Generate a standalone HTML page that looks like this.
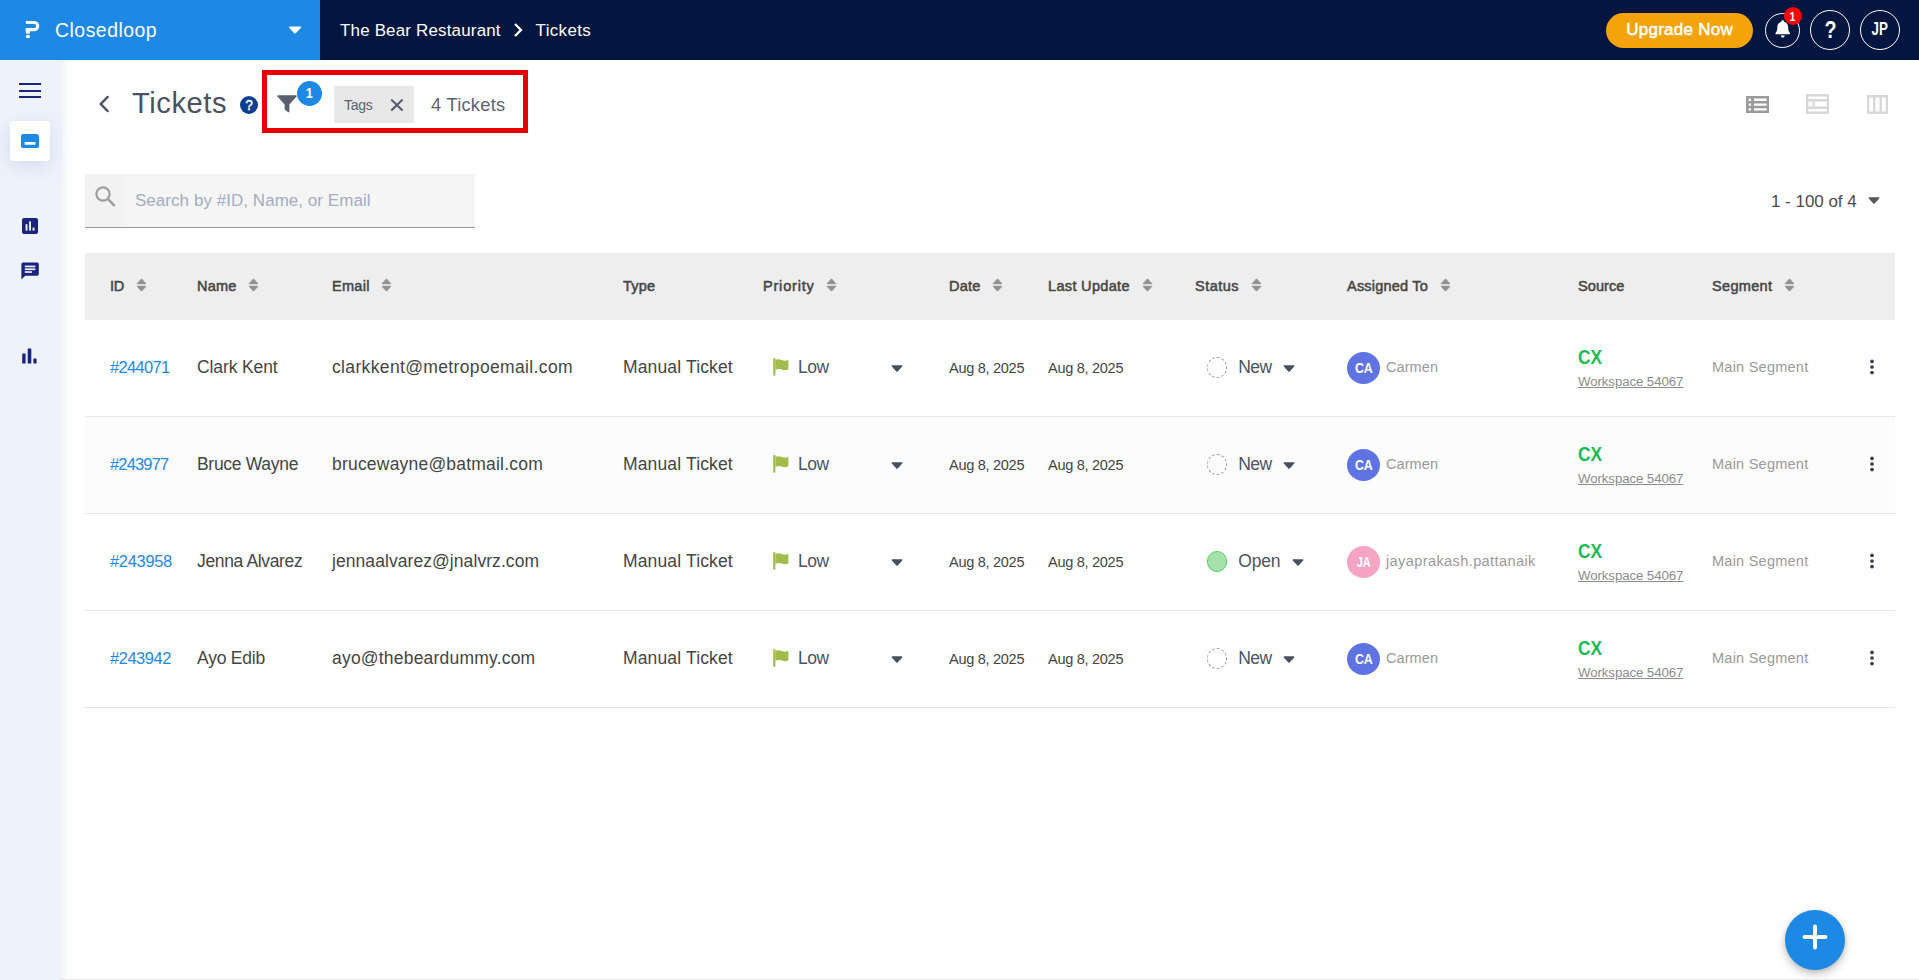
<!DOCTYPE html>
<html lang="en"><head><meta charset="utf-8"><title>Tickets - The Bear Restaurant</title>
<style>
*{box-sizing:border-box;margin:0;padding:0}
html,body{width:1919px;height:980px;overflow:hidden;background:#fff}
body{font-family:"Liberation Sans","DejaVu Sans",sans-serif;position:relative;color:#454545}
.t{white-space:pre;display:inline-block}
svg{display:block}
/* top bar */
#topbar{position:absolute;left:0;top:0;width:1919px;height:60px;background:#02163f;color:#fff}
#brand{position:absolute;left:0;top:0;width:320px;height:60px;background:#1e88e5;line-height:60px}
#brand .logo{position:absolute;left:25px;top:20px}
#brand .name{position:absolute;left:55px;top:0}
#brand .dd{position:absolute;left:288px;top:26px}
#crumbs{position:absolute;left:340px;top:1px;height:60px;line-height:60px;display:flex;align-items:center}
#crumbs .sep{margin:0 13px 0 12px;position:relative;top:-1.5px}
#upgrade{position:absolute;left:1606px;top:13px;width:147px;height:35px;border-radius:18px;background:#f5a30a;line-height:33px;text-align:center}
.rb{position:absolute;border:1px solid #fff;border-radius:50%;display:flex;align-items:center;justify-content:center}
#bell{left:1765px;top:13px;width:35px;height:35px}
#bell .badge{position:absolute;left:18px;top:-7px;width:18px;height:18px;border-radius:50%;background:#f9000b;line-height:18px;text-align:center}
#help{left:1810px;top:10px;width:40px;height:40px}
#user{left:1860px;top:10px;width:40px;height:40px}
/* side */
#side{position:absolute;left:0;top:60px;width:62px;height:920px;background:#eef2fb}
#sideshadow{position:absolute;left:62px;top:60px;width:14px;height:920px;background:linear-gradient(90deg,rgba(222,227,240,.38),rgba(240,243,250,.16) 45%,rgba(255,255,255,0))}
#side .burger{position:absolute;left:19px;top:83px;width:22px}
#side .burger i{display:block;height:2px;background:#1a237e;margin-bottom:4.5px}
#side .act{position:absolute;left:10px;top:61px;width:40px;height:40px;border-radius:3px;background:#fff;box-shadow:0 5px 18px rgba(150,165,210,.3)}
#side svg{position:absolute}
/* title row */
#back{position:absolute;left:98px;top:95px}
#title{position:absolute;left:132px;top:72px;height:60px;line-height:60px;color:#4a5261}
#qhelp{position:absolute;left:240px;top:96px;width:18px;height:18px;border-radius:50%;background:#0b3f91;color:#fff;text-align:center;line-height:18px}
#hl{position:absolute;left:262px;top:70px;width:266px;height:63px;border:5px solid #e60202}
#funnel{position:absolute;left:277px;top:95px}
#fbadge{position:absolute;left:297px;top:81px;width:25px;height:25px;border-radius:50%;background:#1e88e5;color:#fff;text-align:center;line-height:25px}
#chip{position:absolute;left:334px;top:86px;width:80px;height:37px;background:#e8e8e8;line-height:37px;color:#5b6370}
#chip .lbl{position:absolute;left:10px;top:0}
#chip svg{position:absolute;left:56px;top:13px}
#count{position:absolute;left:431px;top:75px;height:60px;line-height:60px;color:#5b6370}
#views svg{position:absolute}
/* search */
#search{position:absolute;left:85px;top:174px;width:390px;height:54px;background:#f5f5f5;border-bottom:1px solid #9a9a9a}
#search .ic{position:absolute;left:0;top:0;width:40px;height:53px;background:#f2f2f2}
#search .ic svg{position:absolute;left:10px;top:12px}
#search .ph{position:absolute;left:50px;top:0;line-height:53px;color:#a3acc0}
#pager{position:absolute;left:1771px;top:181px;height:42px;line-height:42px;color:#4a4a4a}
#pager svg{position:absolute;left:96.5px;top:16px}
/* table */
#tbl{position:absolute;left:85px;top:253px;width:1810px}
.th,.tr{display:flex;width:1810px}
.th{height:67px;background:#eeeeee;color:#454545}
.tr{height:97px;border-bottom:1px solid #e7e7e7;background:#fff}
.tr.alt{background:#fcfcfc}
.c{display:flex;align-items:center;height:100%;flex:none;position:relative;padding-bottom:2px}
.th .c{padding-top:0}
.sort{margin-left:12px;position:relative;top:-0.5px}
.c-pad{width:25px}.c-id{width:87px}.c-name{width:135px}.c-email{width:291px}.c-type{width:140px}
.c-prio{width:186px}.c-date{width:99px}.c-upd{width:147px}.c-status{width:152px}.c-asg{width:231px}
.c-src{width:134px}.c-seg{width:138px}.c-act{width:45px}
.tr a{color:#1e88e5}
.sel{color:#4c5462;position:relative;width:150px;height:40px;display:flex;align-items:center;padding-left:9px}
.sel .flag{margin-right:9px;position:relative;top:0px;margin-left:1px}
.sel .caret{position:absolute;left:128px;top:18px}
.c-date,.c-upd{padding-top:1px}
.st{display:inline-block;width:20.5px;height:20.5px;border-radius:50%;margin-left:11.7px;margin-right:11px;position:relative;top:0.5px}
.st-new{border:1px dashed #9a9a9a}
.st-open{background:#a5e1a9;border:1px solid #55cf66}
.tr .c-status{color:#4c5462}
.c-status .caret{margin-left:11px;position:relative;top:1px}
.av{position:relative;top:1px;width:33px;height:32px;border-radius:50%;color:#fff;display:flex;align-items:center;justify-content:center;margin-right:6px;margin-left:0px}
.av.ca{background:#5f74e2}.av.ja{background:#f6a4c4}
.asg-name{color:#9a9a9a}
.c-src{flex-direction:column;align-items:flex-start;justify-content:center}
.cx{color:#1cb955;line-height:24px;margin-top:2px}
.ws{color:#8c8c8c;line-height:18px;margin-top:1px;text-decoration:underline}
.ws .t{text-decoration:underline}
.tr .c-seg{color:#9a9a9a}
.kebab{position:absolute;left:19px;top:39px}
#fab{position:absolute;left:1785px;top:910px;width:60px;height:60px;border-radius:50%;background:#1e88e5;box-shadow:0 4px 10px rgba(0,0,0,.22),0 1px 4px rgba(0,0,0,.12)}
#fab svg{position:absolute;left:17px;top:14px}
#botline{position:absolute;left:60px;top:979px;width:1859px;height:1px;background:#e9e9ec}
</style></head><body>

<header id="topbar">
  <div id="brand">
    <svg class="logo" width="15" height="19" viewBox="0 0 15 19"><path d="M0.8 2.5 H9.15 A3.55 3.55 0 0 1 9.15 9.6 H0.8" fill="none" stroke="#fff" stroke-width="3.2"/><rect x="0.8" y="8" width="4.1" height="5.5" fill="#fff"/><circle cx="2.9" cy="16.4" r="1.95" fill="#fff"/></svg>
    <div class="name"><span class="t" style="font-size:19.4px;font-weight:400;letter-spacing:0.512px;margin-right:-0.512px;">Closedloop</span></div>
    <svg class="dd" width="14" height="8" viewBox="0 0 14 8"><path d="M1.6 0.4 H12.4 Q13.7 0.6 12.9 1.7 L7.8 7.2 Q7 7.9 6.2 7.2 L1.1 1.7 Q0.3 0.6 1.6 0.4 Z" fill="#fff"/></svg>
  </div>
  <nav id="crumbs"><span class="t" style="font-size:16.97px;font-weight:400;letter-spacing:0.177px;margin-right:-0.177px;">The Bear Restaurant</span><svg class="sep" width="10" height="14" viewBox="0 0 10 14"><path d="M2 1 L8 7 L2 13" fill="none" stroke="#fff" stroke-width="2.3"/></svg><span class="t" style="font-size:16.97px;font-weight:400;letter-spacing:0.354px;margin-right:-0.354px;">Tickets</span></nav>
  <div id="upgrade"><span class="t" style="font-size:16.97px;font-weight:400;letter-spacing:0.278px;-webkit-text-stroke:0.5px currentColor;margin-right:-0.278px;">Upgrade Now</span></div>
  <div id="bell" class="rb"><svg style="position:relative;top:-1.5px" width="15.5" height="18" viewBox="0 0 16 19"><path d="M8 0.3 C8.9 0.3 9.5 0.9 9.5 1.8 C12.3 2.5 13.7 4.9 13.7 7.6 C13.7 11.2 14.6 12.6 15.6 13.6 C16 14 15.8 15 15 15 H1 C0.2 15 0 14 0.4 13.6 C1.4 12.6 2.3 11.2 2.3 7.6 C2.3 4.9 3.7 2.5 6.5 1.8 C6.5 0.9 7.1 0.3 8 0.3 Z M5.9 16.3 H10.1 C10.1 17.6 9.2 18.5 8 18.5 C6.8 18.5 5.9 17.6 5.9 16.3 Z" fill="#fff"/></svg><span class="badge"><span class="t" style="font-size:12.61px;font-weight:700;letter-spacing:0.000px;transform:scaleX(0.846);transform-origin:center center;">1</span></span></div>
  <div id="help" class="rb"><span class="t" style="font-size:24.25px;font-weight:700;letter-spacing:0.000px;transform:scaleX(0.811);transform-origin:center center;">?</span></div>
  <div id="user" class="rb"><span class="t" style="font-size:17.46px;font-weight:700;letter-spacing:0.000px;transform:scaleX(0.767);transform-origin:center center;position:relative;top:-1px;">JP</span></div>
</header>

<aside id="side">
  <div class="burger" style="top:23px"><i></i><i></i><i></i></div>
  <div class="act"></div>
  <svg style="left:21px;top:74px" width="18" height="14.2" viewBox="0 0 18 14.2"><rect x="0" y="0" width="18" height="14.2" rx="2.4" fill="#1e88e5"/><rect x="3.6" y="8" width="10.8" height="2.8" rx="0.6" fill="#fff"/></svg>
  <svg style="left:22px;top:158px" width="16" height="16" viewBox="0 0 16 16"><rect x="0" y="0" width="16" height="16" rx="2" fill="#1a237e"/><rect x="3.6" y="6.2" width="1.9" height="6.4" fill="#eef2fb"/><rect x="7.1" y="3.4" width="1.9" height="9.2" fill="#eef2fb"/><rect x="10.6" y="9.6" width="1.9" height="3" fill="#eef2fb"/></svg>
  <svg style="left:21px;top:202px" width="18" height="18" viewBox="0 0 18 18"><path d="M2 0.4 H16 Q17.8 0.4 17.8 2.2 V12 Q17.8 13.8 16 13.8 H4.2 L0.4 17.6 V2.2 Q0.4 0.4 2 0.4 Z" fill="#1a237e"/><rect x="3.8" y="3.6" width="10.6" height="1.7" fill="#eef2fb"/><rect x="3.8" y="6.4" width="10.6" height="1.7" fill="#eef2fb"/><rect x="3.8" y="9.2" width="7.2" height="1.7" fill="#eef2fb"/></svg>
  <svg style="left:22px;top:288px" width="15" height="16" viewBox="0 0 15 16"><rect x="0.2" y="5.6" width="3.4" height="10" rx="0.5" fill="#1a237e"/><rect x="5.7" y="0.4" width="3.6" height="15.2" rx="0.5" fill="#1a237e"/><rect x="11.4" y="10.6" width="3.2" height="5" rx="0.5" fill="#1a237e"/></svg>
</aside>
<div id="sideshadow"></div>

<main>
  <svg id="back" width="12" height="18" viewBox="0 0 12 18"><path d="M9.6 2 L2.8 9 L9.6 16" fill="none" stroke="#4a5261" stroke-width="2.5" stroke-linecap="round"/></svg>
  <h1 id="title"><span class="t" style="font-size:29.1px;font-weight:400;letter-spacing:0.589px;margin-right:-0.589px;">Tickets</span></h1>
  <div id="qhelp"><span class="t" style="font-size:15.04px;font-weight:400;letter-spacing:0.000px;-webkit-text-stroke:0.5px currentColor;transform:scaleX(0.873);transform-origin:center center;">?</span></div>
  <div id="hl"></div>
  <svg id="funnel" width="20" height="18" viewBox="0 0 20 18"><path d="M1.2 0.2 H18.8 Q20.3 0.5 19.4 1.8 L12.4 9.6 V16.4 Q12.2 17.9 10.9 17 L8.2 14.9 Q7.6 14.4 7.6 13.6 V9.6 L0.6 1.8 Q-0.3 0.5 1.2 0.2 Z" fill="#5a606b"/></svg>
  <div id="fbadge"><span class="t" style="font-size:15.04px;font-weight:700;letter-spacing:0.000px;transform:scaleX(0.845);transform-origin:center center;position:relative;top:-1px;">1</span></div>
  <div id="chip"><span class="lbl"><span class="t" style="font-size:14.06px;font-weight:400;letter-spacing:-0.312px;margin-right:0.312px;">Tags</span></span><svg width="14" height="12" viewBox="0 0 14 12"><path d="M1.2 0.6 L12.6 11.6 M12.6 0.6 L1.2 11.6" stroke="#555c68" stroke-width="2.1" fill="none"/></svg></div>
  <div id="count"><span class="t" style="font-size:18.19px;font-weight:400;letter-spacing:0.287px;margin-right:-0.287px;">4 Tickets</span></div>
  <div id="views">
    <svg style="left:1746px;top:96px" width="23" height="17" viewBox="0 0 23 17"><path fill-rule="evenodd" fill="#9b9b9b" d="M0 0 H23 V17 H0 Z M2.6 2.6 V5 H5 V2.6 Z M8 2.6 V5 H20.6 V2.6 Z M2.6 7.4 V9.8 H5 V7.4 Z M8 7.4 V9.8 H20.6 V7.4 Z M2.6 12.2 V14.6 H5 V12.2 Z M8 12.2 V14.6 H20.6 V12.2 Z"/></svg>
    <svg style="left:1806px;top:94px" width="23" height="20" viewBox="0 0 23 20"><path fill-rule="evenodd" fill="#d8d8d8" d="M0 0 H23 V20 H0 Z M2.4 2.4 V5 H20.6 V2.4 Z M2.4 7.4 V12.6 H6.4 V7.4 Z M8.8 7.4 V12.6 H20.6 V7.4 Z M2.4 15 V17.6 H20.6 V15 Z"/></svg>
    <svg style="left:1867px;top:95px" width="21" height="19" viewBox="0 0 21 19"><path fill-rule="evenodd" fill="#d8d8d8" d="M0 0 H21 V19 H0 Z M2.2 2.4 V16.6 H6 V2.4 Z M8.4 2.4 V16.6 H12.6 V2.4 Z M15 2.4 V16.6 H18.8 V2.4 Z"/></svg>
  </div>

  <div id="search"><div class="ic"><svg width="21" height="21" viewBox="0 0 21 21"><circle cx="8" cy="8" r="6.6" fill="none" stroke="#9e9e9e" stroke-width="2.2"/><path d="M12.8 12.8 L19.6 19.8" stroke="#9e9e9e" stroke-width="2.6"/></svg></div><span class="ph"><span class="t" style="font-size:16.97px;font-weight:400;letter-spacing:0.066px;margin-right:-0.066px;">Search by #ID, Name, or Email</span></span></div>
  <div id="pager"><span class="t" style="font-size:16.97px;font-weight:400;letter-spacing:-0.009px;margin-right:0.009px;">1 - 100 of 4</span><svg width="12" height="7" viewBox="0 0 12 7"><path d="M1.2 0.3 H10.8 Q11.9 0.5 11.2 1.5 L6.7 6.4 Q6 7 5.3 6.4 L0.8 1.5 Q0.1 0.5 1.2 0.3 Z" fill="#585858"/></svg></div>

  <div id="tbl">
    <div class="th">
      <div class="c c-pad"></div>
      <div class="c c-id"><span class="t" style="font-size:14.55px;font-weight:400;letter-spacing:-0.211px;-webkit-text-stroke:0.5px currentColor;">ID</span><svg class="sort" width="11" height="14" viewBox="0 0 11 14"><path d="M5.5 0.9 L9.9 5.7 H1.1 Z M1.1 8.3 H9.9 L5.5 13.1 Z" fill="#909090" stroke="#909090" stroke-width="1" stroke-linejoin="round"/></svg></div>
      <div class="c c-name"><span class="t" style="font-size:14.55px;font-weight:400;letter-spacing:0.151px;-webkit-text-stroke:0.5px currentColor;margin-right:-0.151px;">Name</span><svg class="sort" width="11" height="14" viewBox="0 0 11 14"><path d="M5.5 0.9 L9.9 5.7 H1.1 Z M1.1 8.3 H9.9 L5.5 13.1 Z" fill="#909090" stroke="#909090" stroke-width="1" stroke-linejoin="round"/></svg></div>
      <div class="c c-email"><span class="t" style="font-size:14.55px;font-weight:400;letter-spacing:0.258px;-webkit-text-stroke:0.5px currentColor;margin-right:-0.258px;">Email</span><svg class="sort" width="11" height="14" viewBox="0 0 11 14"><path d="M5.5 0.9 L9.9 5.7 H1.1 Z M1.1 8.3 H9.9 L5.5 13.1 Z" fill="#909090" stroke="#909090" stroke-width="1" stroke-linejoin="round"/></svg></div>
      <div class="c c-type"><span class="t" style="font-size:14.55px;font-weight:400;letter-spacing:0.193px;-webkit-text-stroke:0.5px currentColor;margin-right:-0.193px;">Type</span></div>
      <div class="c c-prio"><span class="t" style="font-size:14.55px;font-weight:400;letter-spacing:0.783px;-webkit-text-stroke:0.5px currentColor;margin-right:-0.783px;">Priority</span><svg class="sort" width="11" height="14" viewBox="0 0 11 14"><path d="M5.5 0.9 L9.9 5.7 H1.1 Z M1.1 8.3 H9.9 L5.5 13.1 Z" fill="#909090" stroke="#909090" stroke-width="1" stroke-linejoin="round"/></svg></div>
      <div class="c c-date"><span class="t" style="font-size:14.55px;font-weight:400;letter-spacing:0.214px;-webkit-text-stroke:0.5px currentColor;margin-right:-0.214px;">Date</span><svg class="sort" width="11" height="14" viewBox="0 0 11 14"><path d="M5.5 0.9 L9.9 5.7 H1.1 Z M1.1 8.3 H9.9 L5.5 13.1 Z" fill="#909090" stroke="#909090" stroke-width="1" stroke-linejoin="round"/></svg></div>
      <div class="c c-upd"><span class="t" style="font-size:14.55px;font-weight:400;letter-spacing:0.311px;-webkit-text-stroke:0.5px currentColor;margin-right:-0.311px;">Last Update</span><svg class="sort" width="11" height="14" viewBox="0 0 11 14"><path d="M5.5 0.9 L9.9 5.7 H1.1 Z M1.1 8.3 H9.9 L5.5 13.1 Z" fill="#909090" stroke="#909090" stroke-width="1" stroke-linejoin="round"/></svg></div>
      <div class="c c-status"><span class="t" style="font-size:14.55px;font-weight:400;letter-spacing:0.450px;-webkit-text-stroke:0.5px currentColor;margin-right:-0.450px;">Status</span><svg class="sort" width="11" height="14" viewBox="0 0 11 14"><path d="M5.5 0.9 L9.9 5.7 H1.1 Z M1.1 8.3 H9.9 L5.5 13.1 Z" fill="#909090" stroke="#909090" stroke-width="1" stroke-linejoin="round"/></svg></div>
      <div class="c c-asg"><span class="t" style="font-size:14.55px;font-weight:400;letter-spacing:0.177px;-webkit-text-stroke:0.5px currentColor;margin-right:-0.177px;">Assigned To</span><svg class="sort" width="11" height="14" viewBox="0 0 11 14"><path d="M5.5 0.9 L9.9 5.7 H1.1 Z M1.1 8.3 H9.9 L5.5 13.1 Z" fill="#909090" stroke="#909090" stroke-width="1" stroke-linejoin="round"/></svg></div>
      <div class="c c-src"><span class="t" style="font-size:14.55px;font-weight:400;letter-spacing:0.059px;-webkit-text-stroke:0.5px currentColor;margin-right:-0.059px;">Source</span></div>
      <div class="c c-seg"><span class="t" style="font-size:14.55px;font-weight:400;letter-spacing:0.297px;-webkit-text-stroke:0.5px currentColor;margin-right:-0.297px;">Segment</span><svg class="sort" width="11" height="14" viewBox="0 0 11 14"><path d="M5.5 0.9 L9.9 5.7 H1.1 Z M1.1 8.3 H9.9 L5.5 13.1 Z" fill="#909090" stroke="#909090" stroke-width="1" stroke-linejoin="round"/></svg></div>
      <div class="c c-act"></div>
    </div>
    
  <div class="tr">
    <div class="c c-pad"></div>
    <div class="c c-id"><a><span class="t" style="font-size:16.45px;font-weight:400;letter-spacing:-0.635px;margin-right:0.635px;">#244071</span></a></div>
    <div class="c c-name"><span class="t" style="font-size:17.5px;font-weight:400;letter-spacing:-0.109px;margin-right:0.109px;">Clark Kent</span></div>
    <div class="c c-email"><span class="t" style="font-size:17.5px;font-weight:400;letter-spacing:0.354px;margin-right:-0.354px;">clarkkent@metropoemail.com</span></div>
    <div class="c c-type"><span class="t" style="font-size:17.5px;font-weight:400;letter-spacing:0.145px;margin-right:-0.145px;">Manual Ticket</span></div>
    <div class="c c-prio"><div class="sel"><svg class="flag" width="16" height="18" viewBox="0 0 16 18"><path d="M0.2 0.2 H2.4 V17.6 H0.2 Z" fill="#a1bc4c"/><path d="M2.4 1.8 C5 0.6 7 1.3 8.8 2 C11 2.9 13 2.9 15.4 1.7 V11.3 C13 12.6 11 12.5 8.8 11.6 C7 10.9 5 10.4 2.4 11.7 Z" fill="#a1bc4c"/></svg><span class="t" style="font-size:17.5px;font-weight:400;letter-spacing:-0.531px;margin-right:0.531px;">Low</span><svg class="caret" width="12" height="7" viewBox="0 0 12 7"><path d="M1.2 0.3 H10.8 Q11.9 0.5 11.2 1.5 L6.7 6.4 Q6 7 5.3 6.4 L0.8 1.5 Q0.1 0.5 1.2 0.3 Z" fill="#485160"/></svg></div></div>
    <div class="c c-date"><span class="t" style="font-size:14.55px;font-weight:400;letter-spacing:-0.297px;margin-right:0.297px;">Aug 8, 2025</span></div>
    <div class="c c-upd"><span class="t" style="font-size:14.55px;font-weight:400;letter-spacing:-0.297px;margin-right:0.297px;">Aug 8, 2025</span></div>
    <div class="c c-status"><span class="st st-new"></span><span class="t" style="font-size:17.5px;font-weight:400;letter-spacing:-0.484px;margin-right:0.484px;">New</span><svg class="caret" width="12" height="7" viewBox="0 0 12 7"><path d="M1.2 0.3 H10.8 Q11.9 0.5 11.2 1.5 L6.7 6.4 Q6 7 5.3 6.4 L0.8 1.5 Q0.1 0.5 1.2 0.3 Z" fill="#485160"/></svg></div>
    <div class="c c-asg"><span class="av ca"><span class="t" style="font-size:15.04px;font-weight:700;letter-spacing:0.000px;transform:scaleX(0.826);transform-origin:center center;position:relative;top:-1px;">CA</span></span><span class="asg-name"><span class="t" style="font-size:14.55px;font-weight:400;letter-spacing:0.056px;margin-right:-0.056px;">Carmen</span></span></div>
    <div class="c c-src"><div class="cx"><span class="t" style="font-size:20.37px;font-weight:700;letter-spacing:0.000px;transform:scaleX(0.852);transform-origin:left center;">CX</span></div><div class="ws"><span class="t" style="font-size:13.29px;font-weight:400;letter-spacing:-0.102px;margin-right:0.102px;">Workspace 54067</span></div></div>
    <div class="c c-seg"><span class="t" style="font-size:14.55px;font-weight:400;letter-spacing:0.220px;margin-right:-0.220px;">Main Segment</span></div>
    <div class="c c-act"><svg class="kebab" width="6" height="16" viewBox="0 0 6 16"><circle cx="3" cy="2.4" r="1.85" fill="#3b414c"/><circle cx="3" cy="8" r="1.85" fill="#3b414c"/><circle cx="3" cy="13.6" r="1.85" fill="#3b414c"/></svg></div>
  </div>
    
  <div class="tr alt">
    <div class="c c-pad"></div>
    <div class="c c-id"><a><span class="t" style="font-size:16.45px;font-weight:400;letter-spacing:-0.812px;margin-right:0.812px;">#243977</span></a></div>
    <div class="c c-name"><span class="t" style="font-size:17.5px;font-weight:400;letter-spacing:-0.303px;margin-right:0.303px;">Bruce Wayne</span></div>
    <div class="c c-email"><span class="t" style="font-size:17.5px;font-weight:400;letter-spacing:0.202px;margin-right:-0.202px;">brucewayne@batmail.com</span></div>
    <div class="c c-type"><span class="t" style="font-size:17.5px;font-weight:400;letter-spacing:0.145px;margin-right:-0.145px;">Manual Ticket</span></div>
    <div class="c c-prio"><div class="sel"><svg class="flag" width="16" height="18" viewBox="0 0 16 18"><path d="M0.2 0.2 H2.4 V17.6 H0.2 Z" fill="#a1bc4c"/><path d="M2.4 1.8 C5 0.6 7 1.3 8.8 2 C11 2.9 13 2.9 15.4 1.7 V11.3 C13 12.6 11 12.5 8.8 11.6 C7 10.9 5 10.4 2.4 11.7 Z" fill="#a1bc4c"/></svg><span class="t" style="font-size:17.5px;font-weight:400;letter-spacing:-0.531px;margin-right:0.531px;">Low</span><svg class="caret" width="12" height="7" viewBox="0 0 12 7"><path d="M1.2 0.3 H10.8 Q11.9 0.5 11.2 1.5 L6.7 6.4 Q6 7 5.3 6.4 L0.8 1.5 Q0.1 0.5 1.2 0.3 Z" fill="#485160"/></svg></div></div>
    <div class="c c-date"><span class="t" style="font-size:14.55px;font-weight:400;letter-spacing:-0.297px;margin-right:0.297px;">Aug 8, 2025</span></div>
    <div class="c c-upd"><span class="t" style="font-size:14.55px;font-weight:400;letter-spacing:-0.297px;margin-right:0.297px;">Aug 8, 2025</span></div>
    <div class="c c-status"><span class="st st-new"></span><span class="t" style="font-size:17.5px;font-weight:400;letter-spacing:-0.484px;margin-right:0.484px;">New</span><svg class="caret" width="12" height="7" viewBox="0 0 12 7"><path d="M1.2 0.3 H10.8 Q11.9 0.5 11.2 1.5 L6.7 6.4 Q6 7 5.3 6.4 L0.8 1.5 Q0.1 0.5 1.2 0.3 Z" fill="#485160"/></svg></div>
    <div class="c c-asg"><span class="av ca"><span class="t" style="font-size:15.04px;font-weight:700;letter-spacing:0.000px;transform:scaleX(0.826);transform-origin:center center;position:relative;top:-1px;">CA</span></span><span class="asg-name"><span class="t" style="font-size:14.55px;font-weight:400;letter-spacing:0.056px;margin-right:-0.056px;">Carmen</span></span></div>
    <div class="c c-src"><div class="cx"><span class="t" style="font-size:20.37px;font-weight:700;letter-spacing:0.000px;transform:scaleX(0.852);transform-origin:left center;">CX</span></div><div class="ws"><span class="t" style="font-size:13.29px;font-weight:400;letter-spacing:-0.102px;margin-right:0.102px;">Workspace 54067</span></div></div>
    <div class="c c-seg"><span class="t" style="font-size:14.55px;font-weight:400;letter-spacing:0.220px;margin-right:-0.220px;">Main Segment</span></div>
    <div class="c c-act"><svg class="kebab" width="6" height="16" viewBox="0 0 6 16"><circle cx="3" cy="2.4" r="1.85" fill="#3b414c"/><circle cx="3" cy="8" r="1.85" fill="#3b414c"/><circle cx="3" cy="13.6" r="1.85" fill="#3b414c"/></svg></div>
  </div>
    
  <div class="tr">
    <div class="c c-pad"></div>
    <div class="c c-id"><a><span class="t" style="font-size:16.45px;font-weight:400;letter-spacing:-0.292px;margin-right:0.292px;">#243958</span></a></div>
    <div class="c c-name"><span class="t" style="font-size:17.5px;font-weight:400;letter-spacing:-0.355px;margin-right:0.355px;">Jenna Alvarez</span></div>
    <div class="c c-email"><span class="t" style="font-size:17.5px;font-weight:400;letter-spacing:0.067px;margin-right:-0.067px;">jennaalvarez@jnalvrz.com</span></div>
    <div class="c c-type"><span class="t" style="font-size:17.5px;font-weight:400;letter-spacing:0.145px;margin-right:-0.145px;">Manual Ticket</span></div>
    <div class="c c-prio"><div class="sel"><svg class="flag" width="16" height="18" viewBox="0 0 16 18"><path d="M0.2 0.2 H2.4 V17.6 H0.2 Z" fill="#a1bc4c"/><path d="M2.4 1.8 C5 0.6 7 1.3 8.8 2 C11 2.9 13 2.9 15.4 1.7 V11.3 C13 12.6 11 12.5 8.8 11.6 C7 10.9 5 10.4 2.4 11.7 Z" fill="#a1bc4c"/></svg><span class="t" style="font-size:17.5px;font-weight:400;letter-spacing:-0.531px;margin-right:0.531px;">Low</span><svg class="caret" width="12" height="7" viewBox="0 0 12 7"><path d="M1.2 0.3 H10.8 Q11.9 0.5 11.2 1.5 L6.7 6.4 Q6 7 5.3 6.4 L0.8 1.5 Q0.1 0.5 1.2 0.3 Z" fill="#485160"/></svg></div></div>
    <div class="c c-date"><span class="t" style="font-size:14.55px;font-weight:400;letter-spacing:-0.297px;margin-right:0.297px;">Aug 8, 2025</span></div>
    <div class="c c-upd"><span class="t" style="font-size:14.55px;font-weight:400;letter-spacing:-0.297px;margin-right:0.297px;">Aug 8, 2025</span></div>
    <div class="c c-status"><span class="st st-open"></span><span class="t" style="font-size:17.5px;font-weight:400;letter-spacing:-0.167px;margin-right:0.167px;">Open</span><svg class="caret" width="12" height="7" viewBox="0 0 12 7"><path d="M1.2 0.3 H10.8 Q11.9 0.5 11.2 1.5 L6.7 6.4 Q6 7 5.3 6.4 L0.8 1.5 Q0.1 0.5 1.2 0.3 Z" fill="#485160"/></svg></div>
    <div class="c c-asg"><span class="av ja"><span class="t" style="font-size:15.04px;font-weight:700;letter-spacing:0.000px;transform:scaleX(0.726);transform-origin:center center;position:relative;top:-1px;">JA</span></span><span class="asg-name"><span class="t" style="font-size:14.55px;font-weight:400;letter-spacing:0.388px;margin-right:-0.388px;">jayaprakash.pattanaik</span></span></div>
    <div class="c c-src"><div class="cx"><span class="t" style="font-size:20.37px;font-weight:700;letter-spacing:0.000px;transform:scaleX(0.852);transform-origin:left center;">CX</span></div><div class="ws"><span class="t" style="font-size:13.29px;font-weight:400;letter-spacing:-0.102px;margin-right:0.102px;">Workspace 54067</span></div></div>
    <div class="c c-seg"><span class="t" style="font-size:14.55px;font-weight:400;letter-spacing:0.220px;margin-right:-0.220px;">Main Segment</span></div>
    <div class="c c-act"><svg class="kebab" width="6" height="16" viewBox="0 0 6 16"><circle cx="3" cy="2.4" r="1.85" fill="#3b414c"/><circle cx="3" cy="8" r="1.85" fill="#3b414c"/><circle cx="3" cy="13.6" r="1.85" fill="#3b414c"/></svg></div>
  </div>
    
  <div class="tr">
    <div class="c c-pad"></div>
    <div class="c c-id"><a><span class="t" style="font-size:16.45px;font-weight:400;letter-spacing:-0.451px;margin-right:0.451px;">#243942</span></a></div>
    <div class="c c-name"><span class="t" style="font-size:17.5px;font-weight:400;letter-spacing:-0.214px;margin-right:0.214px;">Ayo Edib</span></div>
    <div class="c c-email"><span class="t" style="font-size:17.5px;font-weight:400;letter-spacing:0.203px;margin-right:-0.203px;">ayo@thebeardummy.com</span></div>
    <div class="c c-type"><span class="t" style="font-size:17.5px;font-weight:400;letter-spacing:0.145px;margin-right:-0.145px;">Manual Ticket</span></div>
    <div class="c c-prio"><div class="sel"><svg class="flag" width="16" height="18" viewBox="0 0 16 18"><path d="M0.2 0.2 H2.4 V17.6 H0.2 Z" fill="#a1bc4c"/><path d="M2.4 1.8 C5 0.6 7 1.3 8.8 2 C11 2.9 13 2.9 15.4 1.7 V11.3 C13 12.6 11 12.5 8.8 11.6 C7 10.9 5 10.4 2.4 11.7 Z" fill="#a1bc4c"/></svg><span class="t" style="font-size:17.5px;font-weight:400;letter-spacing:-0.531px;margin-right:0.531px;">Low</span><svg class="caret" width="12" height="7" viewBox="0 0 12 7"><path d="M1.2 0.3 H10.8 Q11.9 0.5 11.2 1.5 L6.7 6.4 Q6 7 5.3 6.4 L0.8 1.5 Q0.1 0.5 1.2 0.3 Z" fill="#485160"/></svg></div></div>
    <div class="c c-date"><span class="t" style="font-size:14.55px;font-weight:400;letter-spacing:-0.297px;margin-right:0.297px;">Aug 8, 2025</span></div>
    <div class="c c-upd"><span class="t" style="font-size:14.55px;font-weight:400;letter-spacing:-0.297px;margin-right:0.297px;">Aug 8, 2025</span></div>
    <div class="c c-status"><span class="st st-new"></span><span class="t" style="font-size:17.5px;font-weight:400;letter-spacing:-0.484px;margin-right:0.484px;">New</span><svg class="caret" width="12" height="7" viewBox="0 0 12 7"><path d="M1.2 0.3 H10.8 Q11.9 0.5 11.2 1.5 L6.7 6.4 Q6 7 5.3 6.4 L0.8 1.5 Q0.1 0.5 1.2 0.3 Z" fill="#485160"/></svg></div>
    <div class="c c-asg"><span class="av ca"><span class="t" style="font-size:15.04px;font-weight:700;letter-spacing:0.000px;transform:scaleX(0.826);transform-origin:center center;position:relative;top:-1px;">CA</span></span><span class="asg-name"><span class="t" style="font-size:14.55px;font-weight:400;letter-spacing:0.056px;margin-right:-0.056px;">Carmen</span></span></div>
    <div class="c c-src"><div class="cx"><span class="t" style="font-size:20.37px;font-weight:700;letter-spacing:0.000px;transform:scaleX(0.852);transform-origin:left center;">CX</span></div><div class="ws"><span class="t" style="font-size:13.29px;font-weight:400;letter-spacing:-0.102px;margin-right:0.102px;">Workspace 54067</span></div></div>
    <div class="c c-seg"><span class="t" style="font-size:14.55px;font-weight:400;letter-spacing:0.220px;margin-right:-0.220px;">Main Segment</span></div>
    <div class="c c-act"><svg class="kebab" width="6" height="16" viewBox="0 0 6 16"><circle cx="3" cy="2.4" r="1.85" fill="#3b414c"/><circle cx="3" cy="8" r="1.85" fill="#3b414c"/><circle cx="3" cy="13.6" r="1.85" fill="#3b414c"/></svg></div>
  </div>
  </div>

  <button id="fab" style="border:0"><svg width="26" height="26" viewBox="0 0 26 26"><path d="M13 2.6 V23.4 M2.6 13 H23.4" stroke="#fff" stroke-width="4" stroke-linecap="round" fill="none"/></svg></button>
  <div id="botline"></div>
</main>
</body></html>
